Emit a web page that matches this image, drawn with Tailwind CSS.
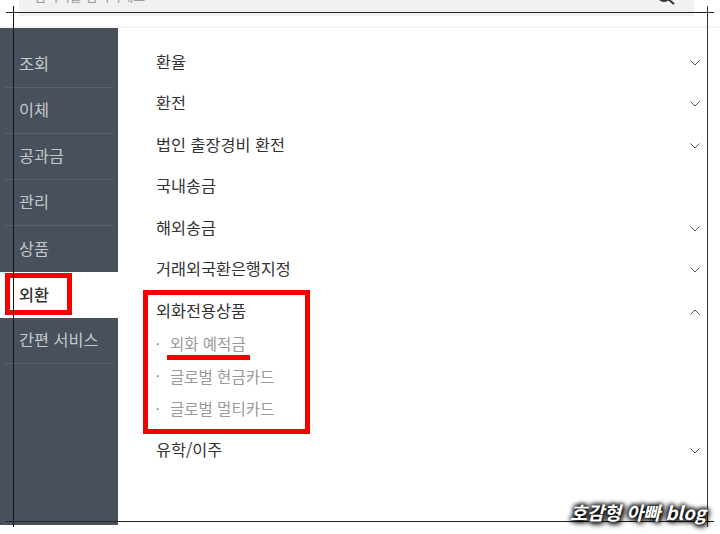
<!DOCTYPE html>
<html lang="ko">
<head>
    <meta charset="UTF-8">
    <title>외환 메뉴</title>
    <script src="https://cdn.jsdelivr.net/npm/@tailwindcss/browser@4"></script>
</head>
<body class="bg-white">
<div class="relative w-[720px] h-[534px] overflow-hidden bg-white font-['Noto_Sans_CJK_KR','Noto_Sans',sans-serif]">
    <!-- Search bar -->
    <div class="h-[28px] border-b-2 border-[#f5f5f5]">
        <div class="relative mx-[19px] w-[675px] h-[16px] bg-[#f1f1f1]">
            <span class="absolute left-[15px] top-[-11px] text-[13px] leading-[14px] text-[#999]">검색어를 입력하세요</span>
            <svg class="absolute left-[636px] top-[-8px]" width="22" height="14" viewBox="0 0 22 14" fill="none" stroke="#333" stroke-width="2">
                <circle cx="9" cy="3" r="6"/>
                <path d="M13.500 7.500L19 12"/>
            </svg>
        </div>
    </div>

    <div class="flex h-[497px]">
        <!-- Sidebar -->
        <nav class="w-[118px] h-full bg-[#47505b] text-[16.300px] text-[#c4c8cc] px-[5px] pt-[14px]">
            <div class="h-[46px] pb-[2px] border-b border-[#5a636d] pl-[14px] flex items-center">조회</div>
            <div class="h-[46px] pb-[2px] border-b border-[#5a636d] pl-[14px] flex items-center">이체</div>
            <div class="h-[46px] pb-[2px] border-b border-[#5a636d] pl-[14px] flex items-center">공과금</div>
            <div class="h-[46px] pb-[2px] border-b border-[#5a636d] pl-[14px] flex items-center">관리</div>
            <div class="h-[46px] pb-[2px] pl-[14px] flex items-center">상품</div>
            <div class="h-[46px] pb-[2px] -mx-[5px] pl-[19px] bg-white text-[#333] font-medium flex items-center">외환</div>
            <div class="h-[46px] pb-[2px] border-b border-[#5a636d] pl-[14px] flex items-center">간편 서비스</div>
        </nav>

        <!-- Menu list -->
        <main class="w-[582px] pl-[38px] pt-[12px] text-[16.300px] text-[#333]">
            <div class="h-[41.500px] flex items-center justify-between">환율
                <svg class="mt-[4px]" width="10" height="6" viewBox="0 0 10 6" fill="none" stroke="#555" stroke-width="1"><path d="M0.500 0.500L5 5L9.500 0.500"/></svg>
            </div>
            <div class="h-[41.500px] flex items-center justify-between">환전
                <svg class="mt-[4px]" width="10" height="6" viewBox="0 0 10 6" fill="none" stroke="#555" stroke-width="1"><path d="M0.500 0.500L5 5L9.500 0.500"/></svg>
            </div>
            <div class="h-[41.500px] flex items-center justify-between">법인 출장경비 환전
                <svg class="mt-[4px]" width="10" height="6" viewBox="0 0 10 6" fill="none" stroke="#555" stroke-width="1"><path d="M0.500 0.500L5 5L9.500 0.500"/></svg>
            </div>
            <div class="h-[41.500px] flex items-center">국내송금</div>
            <div class="h-[41.500px] flex items-center justify-between">해외송금
                <svg class="mt-[4px]" width="10" height="6" viewBox="0 0 10 6" fill="none" stroke="#555" stroke-width="1"><path d="M0.500 0.500L5 5L9.500 0.500"/></svg>
            </div>
            <div class="h-[41.500px] flex items-center justify-between">거래외국환은행지정
                <svg class="mt-[4px]" width="10" height="6" viewBox="0 0 10 6" fill="none" stroke="#555" stroke-width="1"><path d="M0.500 0.500L5 5L9.500 0.500"/></svg>
            </div>
            <div class="h-[41.500px] flex items-center justify-between">외화전용상품
                <svg class="mt-[4px]" width="10" height="6" viewBox="0 0 10 6" fill="none" stroke="#555" stroke-width="1"><path d="M0.500 5.500L5 1L9.500 5.500"/></svg>
            </div>
            <ul class="text-[15.500px] text-[#999] -mt-[3px] mb-[3px]">
                <li class="h-[32.500px] flex items-center"><span class="w-[14px] text-[12px] text-[#666]">·</span>외화 예적금</li>
                <li class="h-[32.500px] flex items-center"><span class="w-[14px] text-[12px] text-[#666]">·</span>글로벌 현금카드</li>
                <li class="h-[32.500px] flex items-center"><span class="w-[14px] text-[12px] text-[#666]">·</span>글로벌 멀티카드</li>
            </ul>
            <div class="h-[41.500px] flex items-center justify-between">유학/이주
                <svg class="mt-[4px]" width="10" height="6" viewBox="0 0 10 6" fill="none" stroke="#555" stroke-width="1"><path d="M0.500 0.500L5 5L9.500 0.500"/></svg>
            </div>
        </main>
    </div>

    <!-- Annotation: red boxes -->
    <div class="absolute left-[5px] top-[273px] w-[67px] h-[42px] border-[5px] border-[#f80000]"></div>
    <div class="absolute left-[143px] top-[290px] w-[167px] h-[144px] border-[5px] border-[#f80000]"></div>
    <div class="absolute left-[167px] top-[355px] w-[83px] h-[5px] bg-[#f80000]"></div>

    <!-- Annotation: frame lines -->
    <div class="absolute left-[6px] top-[12px] w-[708px] h-px bg-[#222]"></div>
    <div class="absolute left-[6px] top-[521px] w-[708px] h-px bg-[#222]"></div>
    <div class="absolute left-[13px] top-[6px] w-px h-[521px] bg-[#111]"></div>
    <div class="absolute left-[707px] top-[6px] w-px h-[521px] bg-[#333]"></div>

    <!-- Watermark -->
    <div class="absolute left-[570px] top-[501px] text-[18.500px] leading-[22px] font-bold italic text-white whitespace-nowrap [text-shadow:0_0_5px_#000,1px_1px_5px_#000,-1px_-1px_5px_#000,2px_2px_6px_#000]">호감형 아빠 blog</div>
</div>
</body>
</html>
